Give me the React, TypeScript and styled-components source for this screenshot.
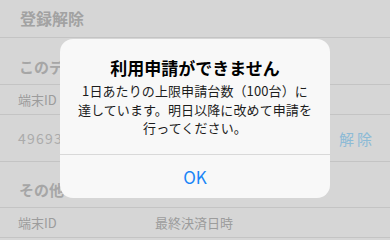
import React from "react";
import styled, { createGlobalStyle } from "styled-components";

const GlobalStyle = createGlobalStyle`
  html, body {
    margin: 0;
    padding: 0;
    background: #d6d6d6;
  }
  * {
    box-sizing: border-box;
  }
`;

const Screen = styled.div`
  position: relative;
  width: 390px;
  height: 240px;
  overflow: hidden;
  background: #d6d6d6;
  font-family: "Noto Sans CJK JP", "Noto Sans", sans-serif;
`;

const NavBar = styled.div`
  display: flex;
  align-items: center;
  height: 38px;
  padding: 0 20px 2px;
  border-bottom: 1px solid #c4c4c4;
  font-size: 16px;
  font-weight: 700;
  color: #a2a2a2;
`;

const SectionHeader = styled.div<{ $height: number }>`
  display: flex;
  align-items: flex-end;
  height: ${(p) => p.$height}px;
  padding: 0 18px 7px 19px;
  border-bottom: 1px solid #c4c4c4;
  font-size: 15px;
  font-weight: 700;
  line-height: 20px;
  color: #a6a6a6;
`;

const Row = styled.div<{ $height: number }>`
  display: grid;
  grid-template-columns: 137px 1fr auto;
  align-items: center;
  height: ${(p) => p.$height}px;
  padding: 0 18px;
  border-bottom: 1px solid #c4c4c4;
`;

const Label = styled.span`
  font-size: 13px;
  color: #9c9c9c;
`;

const Value = styled.span`
  font-size: 14px;
  color: #ababab;
  letter-spacing: 1.2px;
`;

const Action = styled.span`
  font-size: 15px;
  letter-spacing: 3px;
  color: #8dbbd6;
  margin-right: -3px;
`;

const Overlay = styled.div`
  position: absolute;
  inset: 0;
  display: flex;
  align-items: center;
  justify-content: center;
  padding-bottom: 3px;
`;

const Alert = styled.div`
  width: 270px;
  background: #f8f8f8;
  border-radius: 13px;
  overflow: hidden;
  text-align: center;
`;

const AlertBody = styled.div`
  padding: 18px 12px 16px;
`;

const AlertTitle = styled.div`
  font-size: 17px;
  font-weight: 700;
  line-height: 22px;
  color: #000;
`;

const AlertMessage = styled.div`
  margin-top: 3px;
  font-size: 13px;
  line-height: 18.5px;
  letter-spacing: 0.1px;
  color: #1c1c1c;
  white-space: nowrap;
`;

const AlertButton = styled.button`
  display: block;
  width: 100%;
  height: 44px;
  border: none;
  border-top: 1px solid #d9d9d9;
  background: transparent;
  font-family: inherit;
  font-size: 17px;
  color: #1a86f7;
  cursor: pointer;
`;

export default function App() {
  return (
    <Screen>
      <GlobalStyle />
      <NavBar>登録解除</NavBar>
      <SectionHeader $height={47}>このデバイス</SectionHeader>
      <Row $height={30}>
        <Label>端末ID</Label>
      </Row>
      <Row $height={47}>
        <Value>4969320815</Value>
        <span />
        <Action>解除</Action>
      </Row>
      <SectionHeader $height={46}>その他のデバイス</SectionHeader>
      <Row $height={30}>
        <Label>端末ID</Label>
        <Label>最終決済日時</Label>
      </Row>

      <Overlay>
        <Alert>
          <AlertBody>
            <AlertTitle>利用申請ができません</AlertTitle>
            <AlertMessage>
              1日あたりの上限申請台数（100台）に
              <br />
              達しています。明日以降に改めて申請を
              <br />
              行ってください。
            </AlertMessage>
          </AlertBody>
          <AlertButton type="button">OK</AlertButton>
        </Alert>
      </Overlay>
    </Screen>
  );
}
